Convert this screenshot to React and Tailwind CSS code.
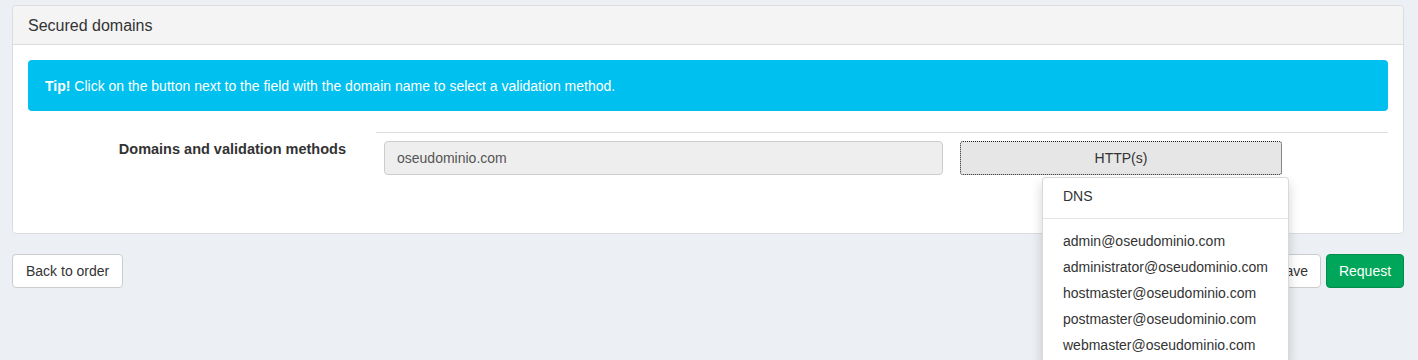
import React from 'react';

const emails = [
    'admin@oseudominio.com',
    'administrator@oseudominio.com',
    'hostmaster@oseudominio.com',
    'postmaster@oseudominio.com',
    'webmaster@oseudominio.com',
];

export default function App() {
    return (
        <div
            className="relative h-[360px] overflow-hidden bg-[#ecf0f5] pl-3 pr-[14px] pt-[5px] text-[14px] text-[#333]"
            style={{ fontFamily: '"Liberation Sans", Arial, sans-serif' }}
        >
            {/* panel */}
            <div className="rounded-[4px] border border-[#dcdcdc] bg-white">
                <div className="h-[39px] border-b border-[#dcdcdc] bg-[#f4f4f4] px-[15px] pt-[10px] text-[16px] leading-[20px] rounded-t-[4px]">
                    Secured domains
                </div>
                <div className="px-[15px] pt-[15px] pb-[58px]">
                    <div className="h-[51px] rounded-[4px] bg-[#00c0ef] px-[17px] pt-[16px] text-[14px] leading-[20px] text-white">
                        <b>Tip!</b> Click on the button next to the field with the domain name to select a validation method.
                    </div>

                    <div className="mt-[21px] flex">
                        <div className="w-[333px] pr-[15px] pt-[8px] text-right text-[14.5px] font-bold leading-[18px]">
                            Domains and validation methods
                        </div>
                        <div className="flex-1 pl-[15px]">
                            <div className="border-t border-[#dedede]"></div>
                            <div className="relative mt-[8px] flex pl-[8px]">
                                <div className="h-[34px] w-[559px] rounded-[4px] border border-[#ccc] bg-[#eee] px-[12px] pt-[7px] text-[14px] leading-[18px] text-[#555]">
                                    oseudominio.com
                                </div>
                                <div className="ml-[17px] relative">
                                    <button className="h-[34px] w-[322px] rounded-[3px] border border-dotted border-[#222] bg-[#e6e6e6] text-center text-[14px] leading-[18px] text-[#333]">
                                        HTTP(s)
                                    </button>

                                    {/* dropdown menu */}
                                    <div className="absolute left-[82px] top-[36px] z-10 w-[247px] rounded-[4px] border border-[#00000026] bg-white py-[5px] shadow-[0_6px_12px_rgba(0,0,0,0.175)]">
                                        <div className="px-[20px] py-[3px] leading-[20px]">DNS</div>
                                        <div className="my-[9px] h-px bg-[#e5e5e5]"></div>
                                        {emails.map((e) => (
                                            <div key={e} className="px-[20px] py-[3px] leading-[20px]">
                                                {e}
                                            </div>
                                        ))}
                                    </div>
                                </div>
                            </div>
                        </div>
                    </div>
                </div>
            </div>

            {/* footer buttons */}
            <div className="mt-[20px] flex justify-between">
                <button className="h-[34px] rounded-[4px] border border-[#ccc] bg-white px-[13px] text-[14px] leading-[18px]">
                    Back to order
                </button>
                <div className="flex gap-[5px]">
                    <button className="h-[34px] rounded-[4px] border border-[#ccc] bg-white px-[12px] text-[14px] leading-[18px]">
                        Save
                    </button>
                    <button className="h-[34px] w-[78px] rounded-[4px] border border-[#008d4c] bg-[#00a65a] text-[14px] leading-[18px] text-white">
                        Request
                    </button>
                </div>
            </div>
        </div>
    );
}
